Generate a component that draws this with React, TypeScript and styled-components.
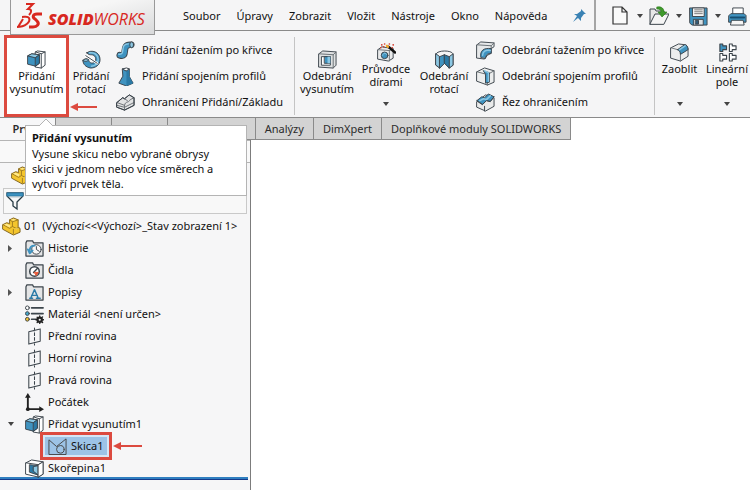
import React from "react";
import styled, { createGlobalStyle } from "styled-components";

const GlobalStyle = createGlobalStyle`
  * { box-sizing: border-box; }
  html, body { margin: 0; height: 100%; }
  body {
    background: #fff;
    color: #111;
    font: 11px/14px "Noto Sans", "Open Sans", sans-serif;
    overflow: hidden;
  }
  button { font: inherit; color: inherit; background: none; border: 0; padding: 0; margin: 0; }
  svg { display: block; flex: none; }
`;

const INK = "#3c454c";
const BLUE = "#3f93c0";
const LIGHT = "#8cc8e4";
const DEEP = "#2b7aa6";
const RED = "#dc4a3f";

const Page = styled.div`
  display: flex;
  flex-direction: column;
  min-height: 100vh;
`;

const Header = styled.header`
  display: flex;
  height: 31px;
  background: #f5f5f6;
  border-bottom: 1px solid #8a8a8a;
`;

const Brand = styled.h1`
  position: relative;
  z-index: 1;
  display: flex;
  flex: none;
  align-items: center;
  gap: 5px;
  width: 145px;
  height: 35px;
  margin: 0 28px 0 10px;
  padding: 0 0 4px 5px;
  background: linear-gradient(165deg, #f6f6f6 40%, #d9dadb);
  border: 1px solid #999;
  border-top: 0;
  color: #d8281f;
  font: italic 400 16px/20px "Open Sans", sans-serif;
  white-space: nowrap;
`;

const BrandName = styled.span`
  padding-top: 7px;
  b { font-weight: 800; }
`;

const MenuBar = styled.nav`
  display: flex;
  align-items: center;
  gap: 16px;
  padding-top: 2px;
  flex: none;
`;

const MenuItem = styled.button`
  white-space: nowrap;
`;

const PinButton = styled.button`
  margin-left: 10px;
`;

const QuickAccess = styled.div`
  display: flex;
  align-items: center;
  flex: none;
  margin-left: 8px;
  padding: 2px 0 0 12px;
  border-left: 2px solid #a5a5a5;
`;

const QuickButton = styled.button`
  width: 24px;
  display: flex;
  justify-content: center;
`;

const DropButton = styled.button`
  width: 15px;
  height: 20px;
  display: flex;
  align-items: center;
  justify-content: center;
`;

const Ribbon = styled.div`
  display: flex;
  height: 87px;
  padding-left: 4px;
  background: #f5f5f6;
  border-bottom: 1px solid #8a8a8a;
`;

const Tool = styled.button<{ $width: number; $active?: boolean; $drop?: boolean }>`
  display: flex;
  flex-direction: column;
  align-items: center;
  flex: none;
  width: ${(p) => p.$width}px;
  margin-top: ${(p) => (p.$active ? 4 : 0)}px;
  padding-top: ${(p) => (p.$active || p.$drop ? 12 : 19)}px;
  background: ${(p) => (p.$active ? "#fff" : "none")};
  border: ${(p) => (p.$active ? `3px solid ${RED}` : "0")};
  line-height: 13px;
  white-space: nowrap;
`;

const ToolLabel = styled.span`
  height: 32px;
  white-space: pre;
`;

const ToolList = styled.div<{ $width: number }>`
  display: flex;
  flex-direction: column;
  flex: none;
  width: ${(p) => p.$width}px;
  padding: 6px 0 0 3px;
`;

const ListTool = styled.button`
  display: flex;
  align-items: center;
  gap: 7px;
  height: 26px;
  white-space: nowrap;
`;

const Divider = styled.div`
  flex: none;
  width: 1px;
  margin: 6px 2px 2px 0;
  background: #c4c4c4;
`;

const TabStrip = styled.div`
  position: relative;
  display: flex;
  height: 22px;
`;

const Tab = styled.button<{ $selected?: boolean; $wide?: boolean }>`
  flex: none;
  padding: 0 9px;
  min-width: ${(p) => (p.$wide ? 86 : 56)}px;
  color: #2b2b2b;
  font-weight: ${(p) => (p.$selected ? 600 : 400)};
  background: ${(p) => (p.$selected ? "#f7f7f8" : "#d3d3d3")};
  border: 1px solid #8a8a8a;
  border-width: ${(p) => (p.$selected ? "0 1px 0 0" : "0 1px 1px 0")};
  white-space: nowrap;
`;

const Tooltip = styled.div`
  position: absolute;
  z-index: 3;
  top: 7px;
  left: 25px;
  width: 222px;
  padding: 4px 6px 4px;
  background: #fff;
  border: 1px solid #b4b4b4;
  line-height: 15px;
  white-space: nowrap;
  svg { position: absolute; left: 12px; top: -8px; }
  strong { display: block; margin-bottom: 1px; font-weight: 700; }
  p { margin: 0; }
`;

const Arrow = styled.svg<{ $left: number; $top: number }>`
  position: absolute;
  z-index: 2;
  left: ${(p) => p.$left}px;
  top: ${(p) => p.$top}px;
`;

const Workspace = styled.main`
  display: flex;
  flex: 1;
`;

const SidePanel = styled.aside`
  display: flex;
  flex-direction: column;
  width: 251px;
  flex: none;
  background: #f6f6f7;
  border-right: 1px solid #7c7c7c;
`;

const Viewport = styled.section`
  flex: 1;
  background: #fff;
`;

const PanelBar = styled.div`
  height: 23px;
  background: #f9f9f9;
  border: 1px solid #b5b5b5;
  border-width: 1px 0;
`;

const PanelTabs = styled.div`
  height: 25px;
  padding: 3px 0 0 11px;
`;

const Filter = styled.button`
  display: block;
  height: 26px;
  margin: 0 3px;
  padding-left: 1px;
  background: #f8f8f8;
  border: 1px solid #c9c9c9;
`;

const Tree = styled.ul`
  list-style: none;
  margin: 0 2px 0 0;
  padding: 1px 0 0;
  border-bottom: 1px solid #153a8a;
  box-shadow: inset 0 -2px #2f7fc0;
`;

const TreeRow = styled.li<{ $root?: boolean }>`
  position: relative;
  display: flex;
  align-items: center;
  height: 22px;
  padding-left: ${(p) => (p.$root ? 2 : 5)}px;
  gap: ${(p) => (p.$root ? 3 : 4)}px;
  white-space: pre;
`;

const Expander = styled.button`
  display: flex;
  align-items: center;
  padding-left: 3px;
  width: 16px;
  height: 16px;
`;

const Spacer = styled.span`
  width: 16px;
`;

const SelectedItem = styled.span`
  display: flex;
  align-items: center;
  gap: 4px;
  height: 28px;
  margin-left: 15px;
  padding: 0 5px;
  color: #111;
  background: #9dc3e6;
  border: 3px solid ${RED};
  box-shadow: inset 0 0 0 2px #d6e6f5;
`;

const Caret = () => (
  <svg width="6" height="4" viewBox="0 0 6 4" aria-hidden="true">
    <path d="M0 0h6L3 4z" fill="#444" />
  </svg>
);

const RedArrow = ({ left, top, width = 27 }: { left: number; top: number; width?: number }) => (
  <Arrow $left={left} $top={top} width={width} height="8" viewBox={`0 0 ${width} 8`} aria-hidden="true">
    <path d={`M0 4L8 0V3H${width}V5H8V8z`} fill={RED} />
  </Arrow>
);

type IconProps = { size?: number; children: React.ReactNode };
const Icon = ({ size = 19, children }: IconProps) => (
  <svg width={size} height={size} viewBox="0 0 20 20" fill="none" stroke={INK} strokeWidth="1" strokeLinejoin="round" strokeLinecap="round" aria-hidden="true">
    {children}
  </svg>
);

const ExtrudeIcon = () => (
  <Icon>
    <path d="M9 2l2-1 8 1v14l-4 3-6-1z" fill="#fff" />
    <path d="M15 4v15M9 2l6 2 4-2" fill="none" />
    <path d="M1 6l4-2 8 1v9l-4 3-8-2z" fill={BLUE} />
    <path d="M1 6l4-2 8 1-4 3z" fill={LIGHT} />
    <path d="M9 8l4-3v9l-4 3z" fill={DEEP} />
  </Icon>
);
const RevolveIcon = () => (
  <Icon>
    <path d="M5 3C10-1 19 2 19 10c0 6-5 9-10 9-5-1-8-4-8-8 2-2 4-2 6-1 0 3 3 5 6 3 3-3 1-8-3-8-2 0-3 0-5-2z" fill={BLUE} />
    <path d="M8 3c5-1 9 2 9 7 0 4-3 7-7 7" stroke={LIGHT} strokeWidth="1.6" />
    <path d="M1 11c2-2 4-2 6-1-1 2-3 3-6 1z" fill={LIGHT} />
    <path d="M4 6l12 8" stroke="#fff" strokeWidth="2.5" />
    <path d="M4 6l12 8" />
  </Icon>
);
const SweepIcon = () => (
  <Icon>
    <path d="M4 15c10 3 0-12 12-11" stroke={INK} strokeWidth="7" />
    <path d="M4 15c10 3 0-12 12-11" stroke={BLUE} strokeWidth="5" />
    <path d="M3 14c8 1 0-11 10-11" stroke={LIGHT} strokeWidth="1.5" />
    <ellipse cx="16.5" cy="4" rx="2" ry="3" fill={LIGHT} />
  </Icon>
);
const LoftIcon = () => (
  <Icon>
    <path d="M7 2h7v8l4 7-7 3-8-3 4-7z" fill={BLUE} />
    <path d="M11 4h3v6l4 7-7 3z" fill={DEEP} stroke="none" />
    <path d="M7 2l4-1 3 1-3 2z" fill="#fff" />
  </Icon>
);
const BoundaryIcon = () => (
  <Icon>
    <path d="M1 10l6-5 2 1 5-4 5 3v8l-10 5-8-3z" fill="#e2e3e4" />
    <path d="M1 10l8 3c1-5 4-2 6-6l4-2M9 18v-5M1 13l8 2 10-5M7 5l5 3" stroke="#6a7075" />
    <path d="M1 10l6-5 2 1 5-4 5 3v8l-10 5-8-3z" />
  </Icon>
);
const CutIcon = () => (
  <Icon>
    <path d="M1 4l4-3 14 1v14l-3 3-15-1z" fill="#dfe1e2" />
    <path d="M1 4l15 1v14M16 5l3-3" stroke="#666d72" />
    <path d="M4 7h9v9H4z" fill="#fff" />
    <path d="M7 7h6v7H7z" fill={BLUE} />
    <path d="M10 7h3v7h-3z" fill={LIGHT} stroke="none" />
  </Icon>
);
const HoleIcon = () => (
  <Icon>
    <path d="M1 7l4-3 12 2v10l-5 3-11-2z" fill="#e9eaeb" />
    <path d="M1 7l12 1v11M13 8l4-2" stroke="#70757a" />
    <circle cx="8" cy="13" r="3.5" fill={BLUE} />
    <path d="M6 13c0-3 4-3 4-1" stroke={LIGHT} />
    <path d="M12 4l7 6" stroke="#111" strokeWidth="2.6" />
    <path d="M10.5 3l1 1" stroke="#f4a62a" strokeWidth="2.6" />
    <path d="M5 2h.1M8 1h.1M4 5h.1M13 1h.1M17 2h.1M16 5h.1M7 4h.1" stroke="#d43626" strokeWidth="1.7" />
  </Icon>
);
const RevolveCutIcon = () => (
  <Icon>
    <path d="M1 4c2-4 16-4 18 0v12l-4 3-5-5-5 5-4-3z" fill="#f5f5f5" />
    <path d="M1 4l4 3v12l-4-3zM15 7l4-3v12l-4 3z" fill={LIGHT} />
    <path d="M5 7l5-2v9l-5 5z" fill={BLUE} />
    <path d="M10 5l5 2v12l-5-5z" fill={DEEP} />
  </Icon>
);
const SweepCutIcon = () => (
  <Icon>
    <path d="M1 4l4-3 14 1v4l-3 2v5l-4 2-3 4-8-1z" fill="#e6e8e9" />
    <path d="M1 4l15 1 3-3M16 5v3" stroke="#666d72" />
    <path d="M5 17C4 10 8 7 16 8v5c-4 0-5 1-6 5z" fill={BLUE} />
    <path d="M7 15c0-4 3-6 8-5" stroke={LIGHT} strokeWidth="1.5" />
  </Icon>
);
const LoftCutIcon = () => (
  <Icon>
    <path d="M1 5l8-4 10 3v12l-7 3-11-4z" fill="#eceded" />
    <path d="M1 5l11 3v11M12 8l7-4" stroke="#666d72" />
    <path d="M8 4l6 2v10l-4 1V8z" fill={BLUE} />
    <path d="M9 4l4 2v9" stroke={LIGHT} strokeWidth="1.4" />
  </Icon>
);
const BoundaryCutIcon = () => (
  <Icon>
    <path d="M1 9l9-7 9 3v9l-9 5-9-4z" fill="#e9eaea" />
    <path d="M1 8l5-4 3 1 4-4 6 3-4 5-4-1-4 4z" fill={BLUE} />
    <path d="M4 8l4-2 3 1 4-4" stroke={LIGHT} strokeWidth="1.6" />
    <path d="M1 8l6 4 4-4 4 1 4-5M9 19v-5" />
  </Icon>
);
const FilletIcon = () => (
  <Icon>
    <path d="M1 5l8-4 8 1 2 4v8l-8 5-10-3z" fill="#eceded" />
    <path d="M1 5l7 2c2 1 3 2 3 5v7" stroke="#70757a" />
    <path d="M8 7l7-5c3 0 4 2 4 5l-8 5c0-3-1-4-3-5z" fill={BLUE} />
    <path d="M10 7l6-4" stroke={LIGHT} strokeWidth="1.5" />
  </Icon>
);
const PatternIcon = () => (
  <Icon>
    {[[2, 1, BLUE], [12, 1, "#fff"], [2, 11, "#fff"], [12, 11, "#fff"]].map(([x, y, fill]) => (
      <path key={`${x}-${y}`} transform={`translate(${x} ${y})`} d="M0 0h3v2h4v4H3v2H0z" fill={fill as string} strokeWidth="1.2" />
    ))}
  </Icon>
);

const PinIcon = () => (
  <svg width="13" height="14" viewBox="0 0 13 14" fill="#3a82b4" aria-hidden="true">
    <path d="M8 0l5 5-2 0-3 4v3L5 9l-5 4 4-6-3-2h3l4-3z" />
  </svg>
);
const NewIcon = () => (
  <svg width="16" height="20" viewBox="0 0 16 20" fill="#fafafa" stroke="#333" strokeWidth="1.2" aria-hidden="true">
    <path d="M1 1h9l5 5v12H1zM10 1v5h5" />
  </svg>
);
const OpenIcon = () => (
  <Icon size={20}>
    <path d="M1 18V3h5l1 2h8v4" fill="#e7e7e7" />
    <path d="M1 18L6 8h14l-5 10z" fill="#f5f5f5" />
    <path d="M8 1c5-1 7 2 7 5h3l-5 5-4-5h3c0-2-1-3-4-3z" fill="#3f9a2c" stroke="#287519" strokeWidth=".6" />
  </Icon>
);
const SaveIcon = () => (
  <Icon>
    <path d="M1 1h18v18H3l-2-2z" fill={BLUE} />
    <path d="M4 1h12v9H4z" fill="#f4f4f4" />
    <path d="M6 3h8M6 5h8M6 7h8" stroke="#777" />
    <path d="M5 13h10v6H5z" fill="#d9dfe3" />
    <path d="M7 14h3v4H7z" fill="#335c79" />
  </Icon>
);
const PrintIcon = () => (
  <Icon>
    <path d="M5 9V1h11v8z" fill="#fff" />
    <path d="M1 9l2-2h14l2 2v7H1z" fill={BLUE} />
    <path d="M3 11h14" stroke="#174e70" strokeWidth="2" />
    <path d="M4 14h12l1 5H3z" fill="#f5f5f5" />
  </Icon>
);

const PartIcon = () => (
  <Icon>
    <path d="M1 8l4-2 3 1V3l4-2 5 2v8l2 1v4l-7 3L1 13z" fill="#f4c52d" stroke="#80621c" />
    <path d="M1 8l7 4 3-2V5L8 3M11 5l6-2M11 10l4 2 3-1M12 13v5" stroke="#a07d22" />
    <path d="M2 8l3-1 4 2-1 2zM9 3l3-1 3 1-3 1zM13 12l2 1 3-1" fill="#ffe98a" stroke="none" />
  </Icon>
);
const FilterIcon = () => (
  <svg width="20" height="20" viewBox="0 0 20 20" aria-hidden="true">
    <path d="M2 2h16v3l-6 6v7l-4-3v-4L2 5z" fill="#f6f7f7" stroke="#263943" strokeWidth="1.3" />
    <path d="M2 2h16v3H2z" fill={BLUE} stroke={DEEP} />
    <path d="M5 6h10" stroke="#b7c3c9" />
  </svg>
);
const FolderShape = () => <path d="M1 18V4l1-2h6l1 2h10v14z" fill="#e4e5e6" strokeWidth="1.3" />;
const HistoryIcon = () => (
  <Icon>
    <FolderShape />
    <circle cx="12" cy="11" r="5" fill="#f6f6f6" />
    <path d="M12 8v3l3 2" />
    <path d="M5 12c0-3 2-5 5-5M3 11l2 4 3-3" stroke={BLUE} strokeWidth="2" />
  </Icon>
);
const SensorIcon = () => (
  <Icon>
    <FolderShape />
    <circle cx="10" cy="11" r="5" fill="#fff" strokeWidth="1.6" />
    <path d="M9 12l4-4" strokeWidth="1.5" />
    <path d="M10 12h4l-2 3z" fill="#e95533" stroke="#e95533" />
  </Icon>
);
const NotesIcon = () => (
  <Icon>
    <FolderShape />
    <path d="M6 16L10 7l4 9M7 13h6M5 16h3M12 16h4" stroke={DEEP} strokeWidth="1.5" />
  </Icon>
);
const MaterialIcon = () => (
  <Icon>
    <path d="M7 3h12M7 9h12M7 15h5" strokeWidth="1.8" />
    <circle cx="2.5" cy="3" r="2" fill="#fff" />
    <circle cx="2.5" cy="9" r="2" fill="#45a9cc" />
    <circle cx="2.5" cy="15" r="2" fill="#f5c532" />
    <circle cx="15.5" cy="15.5" r="2.3" stroke="#222" strokeWidth="2.3" />
    <path d="M15.5 11.5v1M15.5 19v.5M11.5 15.5h1M19 15.5h.5M12.8 12.8l.5.5M18 18l.5.5M18.5 12.5l-.5.5M12.8 18.5l.5-.5" stroke="#222" strokeWidth="1.4" />
  </Icon>
);
const PlaneIcon = () => (
  <Icon>
    <path d="M4 5l12-3v13L4 18zM10 1v3M10 6v3M10 11v3M10 16v3" strokeWidth="1.1" />
  </Icon>
);
const OriginIcon = () => (
  <Icon>
    <path d="M3 3v14h13" stroke="#222" strokeWidth="2" />
    <path d="M3 0l3 5H0zM20 17l-5 3v-6z" fill="#222" stroke="none" />
    <circle cx="3" cy="17" r="2" fill="#222" stroke="none" />
  </Icon>
);
const ShellIcon = () => (
  <Icon>
    <path d="M1 4l6-3 12 2v13l-5 3-13-3z" fill="#fff" />
    <path d="M1 4l13 2v13M14 6l5-3" />
    <path d="M5 6l9 1v10l-9-3z" fill={DEEP} />
    <path d="M9 8l5-1v10l-5-4z" fill={LIGHT} />
    <path d="M14 6l5-3v13l-5 3z" fill="#fff" />
  </Icon>
);
const SketchIcon = () => (
  <Icon>
    <path d="M1 18V3l8 7 10-8v16z" stroke="#444" />
    <circle cx="13" cy="13" r="4" fill="#9dc3e6" stroke="#444" />
  </Icon>
);

const menus = ["Soubor", "Úpravy", "Zobrazit", "Vložit", "Nástroje", "Okno", "Nápověda"];
const quick = [
  { label: "Nový", icon: <NewIcon /> },
  { label: "Otevřít", icon: <OpenIcon /> },
  { label: "Uložit", icon: <SaveIcon /> },
  { label: "Tisk", icon: <PrintIcon /> },
];
const tree: { name: string; icon: React.ReactNode; state?: "closed" | "open" }[] = [
  { name: "Historie", icon: <HistoryIcon />, state: "closed" },
  { name: "Čidla", icon: <SensorIcon /> },
  { name: "Popisy", icon: <NotesIcon />, state: "closed" },
  { name: "Materiál <není určen>", icon: <MaterialIcon /> },
  { name: "Přední rovina", icon: <PlaneIcon /> },
  { name: "Horní rovina", icon: <PlaneIcon /> },
  { name: "Pravá rovina", icon: <PlaneIcon /> },
  { name: "Počátek", icon: <OriginIcon /> },
  { name: "Přidat vysunutím1", icon: <ExtrudeIcon />, state: "open" },
];

type ToolProps = { label: string; icon: React.ReactNode; width: number; active?: boolean; drop?: boolean };
const RibbonTool = ({ label, icon, width, active, drop }: ToolProps) => (
  <Tool $width={width} $active={active} $drop={drop}>
    {icon}
    <ToolLabel>{label}</ToolLabel>
    {drop && <DropButton as="span"><Caret /></DropButton>}
  </Tool>
);

const RibbonList = ({ width, items }: { width: number; items: [string, React.ReactNode][] }) => (
  <ToolList $width={width}>
    {items.map(([label, icon]) => (
      <ListTool key={label}>{icon}{label}</ListTool>
    ))}
  </ToolList>
);

export default function App() {
  return (
    <Page>
      <GlobalStyle />
      <Header>
        <Brand>
          <svg width="27" height="27" viewBox="0 0 27 27" fill="none" stroke="#d8281f" strokeWidth="2" aria-hidden="true">
            <path d="M10 2h7l-5 5c4 0 4 3 1 6" />
            <path d="M1 25c8 0 14-5 12-9-1-2-4-1-7-1M7 17l-5 8" />
            <path d="M26 12h-5c-4 0-5 3-2 5l2 2c3 3 0 6-4 6h-4" strokeWidth="3" />
          </svg>
          <BrandName><b>SOLID</b>WORKS</BrandName>
        </Brand>
        <MenuBar aria-label="Hlavní nabídka">
          {menus.map((m) => <MenuItem key={m}>{m}</MenuItem>)}
          <PinButton aria-label="Připnout"><PinIcon /></PinButton>
        </MenuBar>
        <QuickAccess>
          {quick.map((q) => (
            <React.Fragment key={q.label}>
              <QuickButton aria-label={q.label}>{q.icon}</QuickButton>
              <DropButton aria-label={`${q.label} – možnosti`}><Caret /></DropButton>
            </React.Fragment>
          ))}
        </QuickAccess>
      </Header>

      <Ribbon>
        <RibbonTool label={"Přidání\nvysunutím"} icon={<ExtrudeIcon />} width={65} active />
        <RibbonTool label={"Přidání\nrotací"} icon={<RevolveIcon />} width={44} />
        <RibbonList
          width={181}
          items={[
            ["Přidání tažením po křivce", <SweepIcon />],
            ["Přidání spojením profilů", <LoftIcon />],
            ["Ohraničení Přidání/Základu", <BoundaryIcon />],
          ]}
        />
        <Divider />
        <RibbonTool label={"Odebrání\nvysunutím"} icon={<CutIcon />} width={60} />
        <RibbonTool label={"Průvodce\ndírami"} icon={<HoleIcon />} width={58} drop />
        <RibbonTool label={"Odebrání\nrotací"} icon={<RevolveCutIcon />} width={58} />
        <RibbonList
          width={181}
          items={[
            ["Odebrání tažením po křivce", <SweepCutIcon />],
            ["Odebrání spojením profilů", <LoftCutIcon />],
            ["Řez ohraničením", <BoundaryCutIcon />],
          ]}
        />
        <Divider />
        <RibbonTool label="Zaoblit" icon={<FilletIcon />} width={45} drop />
        <RibbonTool label={"Lineární\npole"} icon={<PatternIcon />} width={50} drop />
      </Ribbon>

      <TabStrip>
        <Tab $selected>Prvky</Tab>
        <Tab>Skica</Tab>
        <Tab>Plochy</Tab>
        <Tab $wide>Přímé úpravy</Tab>
        <Tab>Analýzy</Tab>
        <Tab>DimXpert</Tab>
        <Tab>Doplňkové moduly SOLIDWORKS</Tab>
        <RedArrow left={70} top={-15} />
        <Tooltip role="tooltip">
          <svg width="16" height="8" viewBox="0 0 16 8" aria-hidden="true">
            <path d="M1 8l7-7 7 7" fill="#fff" stroke="#b4b4b4" />
          </svg>
          <strong>Přidání vysunutím</strong>
          <p>Vysune skicu nebo vybrané obrysy<br />skici v jednom nebo více směrech a<br />vytvoří prvek těla.</p>
        </Tooltip>
      </TabStrip>

      <Workspace>
        <SidePanel>
          <PanelBar />
          <PanelTabs><PartIcon /></PanelTabs>
          <Filter aria-label="Filtr"><FilterIcon /></Filter>
          <Tree>
            <TreeRow $root><PartIcon />{"01  (Výchozí<<Výchozí>_Stav zobrazení 1>"}</TreeRow>
            {tree.map((n) => (
              <TreeRow key={n.name}>
                {n.state ? (
                  <Expander aria-label={n.name} aria-expanded={n.state === "open"}>
                    {n.state === "open" ? <Caret /> : (
                      <svg width="4" height="7" viewBox="0 0 4 7" aria-hidden="true"><path d="M0 0l4 3.5L0 7z" fill="#555" /></svg>
                    )}
                  </Expander>
                ) : <Spacer />}
                {n.icon}
                {n.name}
              </TreeRow>
            ))}
            <TreeRow>
              <Spacer />
              <SelectedItem><SketchIcon />Skica1</SelectedItem>
              <RedArrow left={113} top={7} width={29} />
            </TreeRow>
            <TreeRow><Spacer /><ShellIcon />Skořepina1</TreeRow>
          </Tree>
        </SidePanel>
        <Viewport aria-label="Grafická oblast" />
      </Workspace>
    </Page>
  );
}
